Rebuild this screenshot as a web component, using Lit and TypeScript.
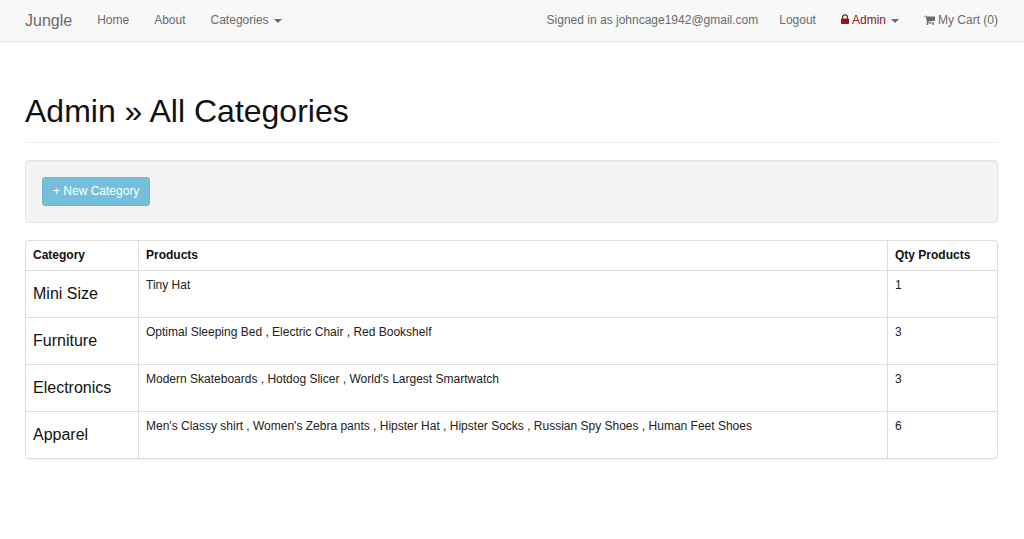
import { LitElement, html, css } from "lit";
import { customElement, property, state } from "lit/decorators.js";

interface Category {
  name: string;
  products: string[];
}

@customElement("site-nav")
export class SiteNav extends LitElement {
  @property() email = "";
  @property({ type: Number }) cartCount = 0;

  static styles = css`
    :host {
      display: block;
      background: #f8f8f8;
      border-bottom: 1px solid #e7e7e7;
    }
    .bar {
      display: flex;
      justify-content: space-between;
      align-items: center;
      min-height: 41px;
      padding: 0 26px 0 25px;
    }
    .group {
      display: flex;
      align-items: center;
      gap: 25px;
    }
    .session {
      display: flex;
      gap: 21px;
    }
    a,
    button,
    .text {
      display: flex;
      align-items: center;
      margin: 0;
      padding: 0;
      border: 0;
      background: none;
      color: #6b6b6b;
      font: inherit;
      font-size: 12px;
      line-height: 17px;
      text-decoration: none;
      white-space: nowrap;
    }
    a.brand {
      font-size: 16px;
    }
    button.admin {
      color: #8f1a1a;
    }
    .caret {
      margin-left: 5px;
      border-top: 4px solid #6b6b6b;
      border-left: 4px solid transparent;
      border-right: 4px solid transparent;
    }
    svg {
      fill: currentColor;
      margin: 0 3px 2px 0;
    }
  `;

  render() {
    return html`
      <nav class="bar">
        <div class="group">
          <a class="brand" href="#">Jungle</a>
          <a href="#">Home</a>
          <a href="#">About</a>
          <button type="button">Categories<span class="caret"></span></button>
        </div>
        <div class="group">
          <div class="session">
            <span class="text">Signed in as ${this.email}</span>
            <a href="#">Logout</a>
          </div>
          <button type="button" class="admin">
            <svg width="8" height="13" viewBox="0 0 1152 1792" aria-hidden="true">
              <path
                d="M320 768h512V576q0-106-75-181t-181-75-181 75-75 181v192zm832 96v576q0 40-28 68t-68 28H96q-40 0-68-28t-28-68V864q0-40 28-68t68-28h32V576q0-184 132-316t316-132 316 132 132 316v192h32q40 0 68 28t28 68z"
              ></path></svg
            >Admin<span class="caret"></span>
          </button>
          <a href="#">
            <svg width="11" height="12" viewBox="0 0 1664 1792" aria-hidden="true">
              <path
                d="M640 1536q0 52-38 90t-90 38-90-38-38-90 38-90 90-38 90 38 38 90zm896 0q0 52-38 90t-90 38-90-38-38-90 38-90 90-38 90 38 38 90zm128-1088v512q0 24-16.500 42.500t-40.500 21.500l-1044 122q13 60 13 70 0 16-24 64h920q26 0 45 19t19 45-19 45-45 19H448q-26 0-45-19t-19-45q0-11 8-31.500t16-36 21.500-40 15.500-29.500L268 384H64q-26 0-45-19T0 320t19-45 45-19h256q16 0 28.500 6.500T368 278t13 24.500 8 26 5.500 29.500 4.500 26h1201q26 0 45 19t19 45z"
              ></path></svg
            >My Cart (${this.cartCount})
          </a>
        </div>
      </nav>
    `;
  }
}

@customElement("category-table")
export class CategoryTable extends LitElement {
  @property({ attribute: false }) categories: Category[] = [];

  static styles = css`
    :host {
      display: block;
      border: 1px solid #dddddd;
      border-radius: 4px;
      box-shadow: 0 1px 1px rgba(0, 0, 0, 0.05);
    }
    table {
      width: 100%;
      border-collapse: collapse;
      font-size: 12px;
      line-height: 17px;
    }
    th,
    td {
      padding: 6px 7px;
      text-align: left;
      vertical-align: top;
      color: #222222;
    }
    th {
      color: #111111;
    }
    th + th,
    td + td {
      border-left: 1px solid #dddddd;
    }
    tbody tr {
      border-top: 1px solid #dddddd;
    }
    .name {
      width: 98px;
    }
    .qty {
      width: 95px;
    }
    h4 {
      margin: 8px 0 9px;
      font-size: 16px;
      font-weight: 500;
      line-height: 17px;
      color: #111111;
    }
  `;

  render() {
    return html`
      <table>
        <thead>
          <tr>
            <th class="name" scope="col">Category</th>
            <th scope="col">Products</th>
            <th class="qty" scope="col">Qty Products</th>
          </tr>
        </thead>
        <tbody>
          ${this.categories.map(
            (c) => html`<tr>
              <td><h4>${c.name}</h4></td>
              <td>${c.products.join(" , ")}</td>
              <td>${c.products.length}</td>
            </tr>`
          )}
        </tbody>
      </table>
    `;
  }
}

@customElement("app-root")
export class AppRoot extends LitElement {
  @state() private categories: Category[] = [
    { name: "Mini Size", products: ["Tiny Hat"] },
    { name: "Furniture", products: ["Optimal Sleeping Bed", "Electric Chair", "Red Bookshelf"] },
    { name: "Electronics", products: ["Modern Skateboards", "Hotdog Slicer", "World's Largest Smartwatch"] },
    {
      name: "Apparel",
      products: [
        "Men's Classy shirt",
        "Women's Zebra pants",
        "Hipster Hat",
        "Hipster Socks",
        "Russian Spy Shoes",
        "Human Feet Shoes",
      ],
    },
  ];

  static styles = css`
    :host {
      display: block;
      min-height: 100vh;
      background: #ffffff;
      font-family: "Helvetica Neue", Helvetica, "Liberation Sans", Arial, sans-serif;
    }
    main {
      padding: 51px 26px 32px 25px;
    }
    header {
      padding-bottom: 13px;
      margin-bottom: 17px;
      border-bottom: 1px solid #eeeeee;
    }
    h1 {
      margin: 0;
      font-size: 32px;
      font-weight: 500;
      line-height: 36px;
      color: #111111;
    }
    .well {
      display: flex;
      padding: 16px;
      margin-bottom: 17px;
      background: #f4f4f4;
      border: 1px solid #e3e3e3;
      border-radius: 4px;
      box-shadow: inset 0 1px 1px rgba(0, 0, 0, 0.05);
    }
    .create {
      padding: 5px 10px;
      border: 1px solid #67bbd9;
      border-radius: 3px;
      background: #74bfdb;
      color: #ffffff;
      font-size: 12px;
      line-height: 17px;
      text-decoration: none;
    }
  `;

  render() {
    return html`
      <site-nav email="johncage1942@gmail.com" .cartCount=${0}></site-nav>
      <main>
        <header><h1>Admin » All Categories</h1></header>
        <div class="well"><a class="create" href="#">+ New Category</a></div>
        <category-table .categories=${this.categories}></category-table>
      </main>
    `;
  }
}
